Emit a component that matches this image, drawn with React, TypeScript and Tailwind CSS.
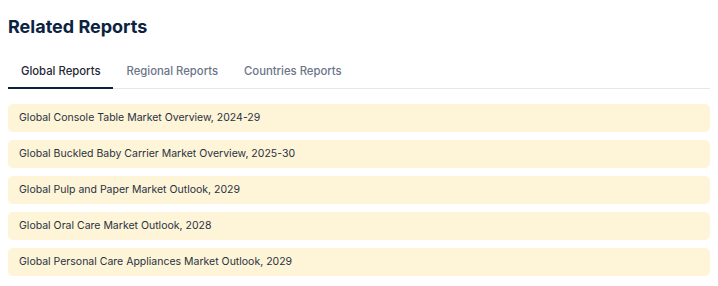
import { useState } from 'react'

const tabs = ['Global Reports', 'Regional Reports', 'Countries Reports']

const reports = [
    'Global Console Table Market Overview, 2024-29',
    'Global Buckled Baby Carrier Market Overview, 2025-30',
    'Global Pulp and Paper Market Outlook, 2029',
    'Global Oral Care Market Outlook, 2028',
    'Global Personal Care Appliances Market Outlook, 2029',
]

export default function App() {
    const [active, setActive] = useState(0)

    return (
        <div className="w-[718px] h-[286px] bg-white px-2 pt-[13px] font-['Inter',sans-serif]">
            <h2 className="text-[18px] leading-[27px] font-bold text-[#0b2340]">Related Reports</h2>

            {/* Tabs */}
            <div className="mt-3 flex border-b border-[#e5e7eb]">
                {tabs.map((t, i) => (
                    <button
                        key={t}
                        onClick={() => setActive(i)}
                        className={
                            i === active
                                ? "-mb-px px-[13px] pt-[10px] pb-[7px] text-[11.3px] leading-[18px] font-medium text-[#1f2937] border-b-2 border-[#0b2340]"
                                : "-mb-px px-[13px] pt-[10px] pb-[7px] text-[11.3px] leading-[18px] font-medium text-[#6b7588] border-b-2 border-transparent"
                        }
                    >
                        {t}
                    </button>
                ))}
            </div>

            {/* Report list */}
            <div className="mt-[15px] flex flex-col gap-2">
                {reports.map(r => (
                    <div key={r} className="h-7 flex items-center px-[11px] rounded-[5px] bg-[#fef4d8] text-[10.5px] text-[#283241]">
                        {r}
                    </div>
                ))}
            </div>
        </div>
    )
}
